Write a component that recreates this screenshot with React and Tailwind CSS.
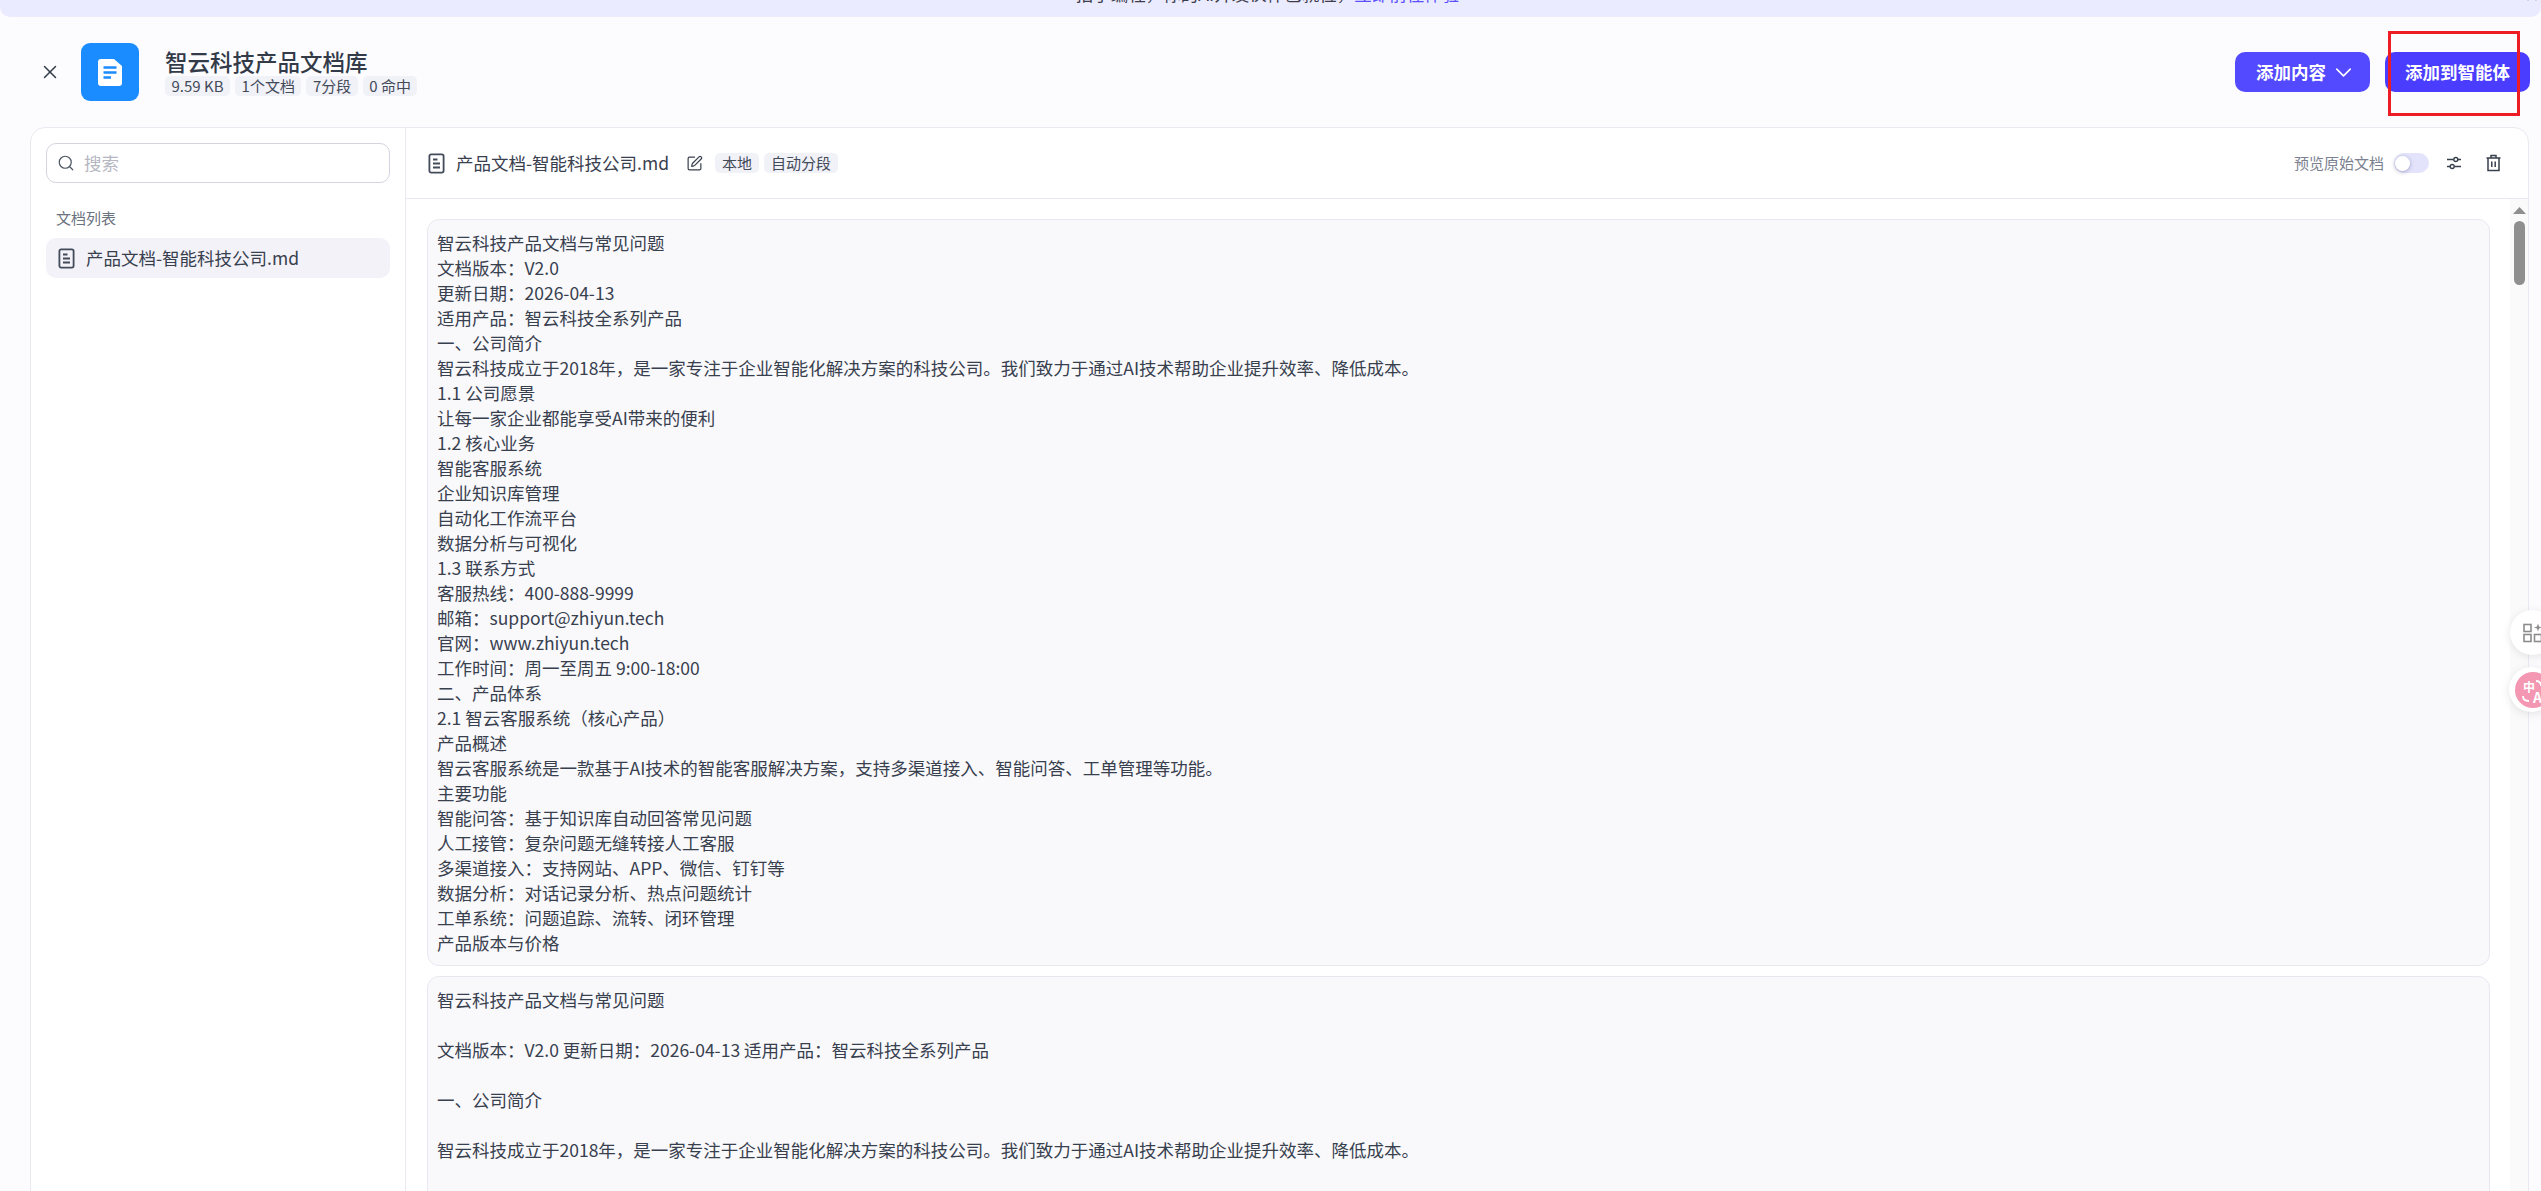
import React from "react";
import { X, ChevronDown, Search, SquarePen } from "lucide-react";

const FIRST = [
  "智云科技产品文档与常见问题", "文档版本：V2.0", "更新日期：2026-04-13", "适用产品：智云科技全系列产品",
  "一、公司简介", "智云科技成立于2018年，是一家专注于企业智能化解决方案的科技公司。我们致力于通过AI技术帮助企业提升效率、降低成本。",
  "1.1 公司愿景", "让每一家企业都能享受AI带来的便利", "1.2 核心业务", "智能客服系统", "企业知识库管理", "自动化工作流平台",
  "数据分析与可视化", "1.3 联系方式", "客服热线：400-888-9999", "邮箱：support@zhiyun.tech", "官网：www.zhiyun.tech",
  "工作时间：周一至周五 9:00-18:00", "二、产品体系", "2.1 智云客服系统（核心产品）", "产品概述",
  "智云客服系统是一款基于AI技术的智能客服解决方案，支持多渠道接入、智能问答、工单管理等功能。", "主要功能",
  "智能问答：基于知识库自动回答常见问题", "人工接管：复杂问题无缝转接人工客服", "多渠道接入：支持网站、APP、微信、钉钉等",
  "数据分析：对话记录分析、热点问题统计", "工单系统：问题追踪、流转、闭环管理", "产品版本与价格",
];

// the rest of this card is below the fold, blank rows keep it running past the page edge
const SECOND = [
  "智云科技产品文档与常见问题", "", "文档版本：V2.0 更新日期：2026-04-13 适用产品：智云科技全系列产品", "", "一、公司简介", "",
  "智云科技成立于2018年，是一家专注于企业智能化解决方案的科技公司。我们致力于通过AI技术帮助企业提升效率、降低成本。", "", "", "", "",
];

const TAGS = ["9.59 KB", "1个文档", "7分段", "0 命中"];

function DocIcon() {
  return (
    <svg width="17" height="21" viewBox="0 0 17 21" fill="none" stroke="#434b5a" strokeWidth="1.8" className="shrink-0">
      <rect x="1.4" y="1.4" width="14.2" height="18.2" rx="1.8" />
      <path d="M5 6.5h4.5M5 10.5h7M5 14.5h7" />
    </svg>
  );
}

function Card({ lines, className }) {
  return (
    <div className={"rounded-[12px] border border-[#e8e8f1] bg-[#f9f9fc] px-[9px] py-[10px] text-[17.5px] leading-[25px] text-[#38404e] " + className}>
      {lines.map((l, i) => <div key={i} className="h-[25px] whitespace-nowrap">{l}</div>)}
    </div>
  );
}

export default function App() {
  return (
    <div className="relative flex h-[1191px] flex-col overflow-hidden bg-[#fcfcff] font-['Noto_Sans_CJK_SC',sans-serif]">
      <div className="flex h-[17px] shrink-0 items-end justify-center overflow-hidden rounded-b-[10px] bg-[#ebebff] pb-[11px] pr-[6px] text-[17.5px] leading-[25px] text-[#3d3d4a]">
        <span className="whitespace-nowrap">拍了编程，你的AI开发伙伴已就位，<span className="text-[#5a50ff]">立即前往体验</span></span>
      </div>
      <X size={16} strokeWidth={1.6} className="absolute right-[1px] top-[-12px] text-[#8c8c96]" />

      <div className="flex h-[110px] shrink-0 items-center pl-[39px] pr-[11px]">
        <X size={22} strokeWidth={1.6} className="text-[#333a48]" />
        <div className="ml-[20px] flex h-[58px] w-[58px] items-center justify-center rounded-[9px] bg-[#1a8cff]">
          <svg width="24" height="27" viewBox="0 0 24 27">
            <path d="M3 0h13l8 7v17a3 3 0 0 1-3 3H3a3 3 0 0 1-3-3V3a3 3 0 0 1 3-3z" fill="#fff" />
            <path d="M5.5 8.5h13M5.5 13.5h13M5.5 18.5h7.5" stroke="#1a8cff" strokeWidth="2.4" />
          </svg>
        </div>
        <div className="ml-[26px] pb-[2px]">
          <div className="text-[22.5px] font-medium leading-[30px] text-[#333a48]">智云科技产品文档库</div>
          <div className="flex gap-[5px]">
            {TAGS.map(t => (
              <span key={t} className="h-[20px] rounded-[5px] bg-[#f1f1f8] px-[6.5px] text-[15px] leading-[20px] text-[#434a58]">{t}</span>
            ))}
          </div>
        </div>
        <button className="ml-auto flex h-[40px] w-[135px] items-center gap-[4px] rounded-[10px] bg-[#5349ff] pl-[21px] text-[17.5px] font-semibold text-white">
          添加内容 <ChevronDown size={27} strokeWidth={1.4} />
        </button>
        <button className="ml-[15px] h-[40px] w-[145px] rounded-[10px] bg-[#4a3dff] text-[17.5px] font-semibold text-white">添加到智能体</button>
      </div>

      <div className="ml-[30px] mr-[12px] flex h-[1100px] shrink-0 rounded-t-[15px] border border-[#e9e9f2] bg-white">
        <div className="w-[375px] shrink-0 border-r border-[#e9e9f2] px-[15px] pt-[15px]">
          <div className="flex h-[40px] items-center gap-[9px] rounded-[10px] border border-[#d4d4e0] px-[10px] text-[17.5px] text-[#b5b7c2]">
            <Search size={18} strokeWidth={1.6} className="text-[#4b5563]" />
            搜索
          </div>
          <div className="mt-[24px] pl-[10px] text-[15px] leading-[22px] text-[#6b7280]">文档列表</div>
          <div className="mt-[9px] flex h-[40px] items-center gap-[11px] rounded-[10px] bg-[#f2f2f8] pl-[12px] text-[17.5px] text-[#38404e]">
            <DocIcon />
            产品文档-智能科技公司.md
          </div>
        </div>

        <div className="flex min-w-0 flex-1 flex-col">
          <div className="flex h-[71px] shrink-0 items-center border-b border-[#e9e9f2] pl-[22px] pr-[27px]">
            <DocIcon />
            <span className="ml-[11px] text-[17.5px] text-[#38404e]">产品文档-智能科技公司.md</span>
            <SquarePen size={17} strokeWidth={1.7} className="ml-[17px] text-[#38404e]" />
            <span className="ml-[12px] h-[20px] rounded-[5px] bg-[#f1f1f8] px-[7px] text-[15px] leading-[20px] text-[#434a58]">本地</span>
            <span className="ml-[5px] h-[20px] rounded-[5px] bg-[#f1f1f8] px-[7px] text-[15px] leading-[20px] text-[#434a58]">自动分段</span>
            <span className="ml-auto text-[15px] text-[#7b8190]">预览原始文档</span>
            <span className="ml-[10px] flex h-[20px] w-[35px] items-center rounded-full bg-[#e3e4fb] pl-[1px]">
              <span className="h-[15px] w-[15px] rounded-full bg-white shadow-[0_1px_4px_rgba(60,60,120,0.4)]" />
            </span>
            <svg width="14" height="18" viewBox="0 0 14 18" fill="none" stroke="#38404e" strokeWidth="1.4" className="ml-[18px]">
              <path d="M0 5.5h6.5M11 5.5h3M0 12.5h3M7.5 12.5H14" />
              <circle cx="8.8" cy="5.5" r="2" />
              <circle cx="5.2" cy="12.5" r="2" />
            </svg>
            <svg width="15" height="18" viewBox="0 0 15 18" fill="none" stroke="#38404e" strokeWidth="1.5" className="ml-[25px]">
              <path d="M0.5 4h14M5 4V1.5h5V4M2 4v12.5h11V4M5.8 7.5v5.5M9.2 7.5v5.5" />
            </svg>
          </div>
          <div className="flex min-h-0 flex-1">
            <div className="min-w-0 flex-1 pl-[21px] pr-[20px] pt-[20px]">
              <Card lines={FIRST} />
              <Card lines={SECOND} className="mt-[10px]" />
            </div>
            <div className="flex w-[18px] shrink-0 flex-col items-center bg-[#fafafa] pt-[8px]">
              <svg width="13" height="8" viewBox="0 0 13 8"><path d="M6.5 0 13 7H0z" fill="#8f8f8f" /></svg>
              <div className="mt-[6px] h-[64px] w-[11px] rounded-full bg-[#8f8f8f]" />
            </div>
          </div>
        </div>
      </div>

      <div className="absolute left-[2388px] top-[31px] h-[85px] w-[132px] border-[3px] border-[#ee1c25]" />
      <div className="absolute left-[2510px] top-[610px] flex h-[45px] w-[45px] items-center rounded-full bg-white pl-[13px] shadow-[0_2px_10px_rgba(0,0,0,0.1)]">
        <svg width="20" height="20" viewBox="0 0 20 20" fill="none" stroke="#8c8c8c" strokeWidth="1.6" className="shrink-0">
          <rect x="1" y="1.5" width="7" height="7" />
          <rect x="1" y="11.5" width="7" height="7" />
          <rect x="11.5" y="11.5" width="7" height="7" />
          <path d="M15 0.5l1 3 3 1-3 1-1 3-1-3-3-1 3-1z" fill="#8c8c8c" stroke="none" />
        </svg>
      </div>
      <div className="absolute left-[2509px] top-[667px] flex h-[45px] w-[45px] items-center rounded-full bg-white pl-[6px] shadow-[0_2px_10px_rgba(0,0,0,0.1)]">
        <svg width="36" height="36" viewBox="0 0 36 36" className="shrink-0">
          <circle cx="18" cy="18" r="18" fill="#f497b3" />
          <text x="8" y="20" fontSize="12" fontWeight="700" fill="#fff">中</text>
          <text x="18" y="31" fontSize="14" fontWeight="700" fill="#fff">A</text>
          <path d="M21 9c3 0 5 2 5 5M8 24c0 3 2 5 6 5" fill="none" stroke="#fff" strokeWidth="1.8" />
        </svg>
      </div>
    </div>
  );
}
